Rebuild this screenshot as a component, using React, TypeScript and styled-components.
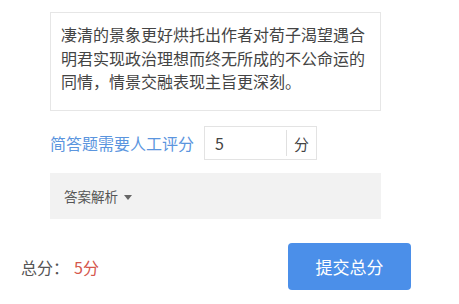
import React from "react";
import styled, { createGlobalStyle } from "styled-components";

const Global = createGlobalStyle`
  html, body { margin: 0; padding: 0; background: #fff; }
  body { font-family: "Noto Sans CJK SC", "Noto Sans", sans-serif; }
`;

const Page = styled.div`
  width: 459px;
  height: 304px;
  overflow: hidden;
  display: flex;
  flex-direction: column;
`;

const Column = styled.div`
  margin-left: 50px;
  width: 331px;
  display: flex;
  flex-direction: column;
`;

const AnswerBox = styled.div`
  margin-top: 12px;
  box-sizing: border-box;
  height: 99px;
  border: 1px solid #e6e6e6;
  padding: 10px 9px 0 10px;
  font-size: 16px;
  line-height: 23.5px;
  color: #444;
`;

const ScoreRow = styled.div`
  margin-top: 15px;
  display: flex;
  align-items: center;
  gap: 10px;
`;

const ScoreLabel = styled.span`
  font-size: 16px;
  color: #5b95de;
  white-space: nowrap;
`;

const ScoreInput = styled.div`
  box-sizing: border-box;
  width: 113px;
  height: 34px;
  border: 1px solid #e3e3e3;
  display: flex;
  align-items: center;
`;

const ScoreValue = styled.span`
  flex: 1;
  padding-left: 10px;
  font-size: 16px;
  color: #444;
`;

const Unit = styled.span`
  width: 29px;
  height: 26px;
  border-left: 1px solid #e0e0e0;
  display: flex;
  align-items: center;
  justify-content: center;
  font-size: 15px;
  color: #444;
`;

const Analysis = styled.div`
  margin-top: 13px;
  height: 46px;
  background: #f2f2f2;
  display: flex;
  align-items: center;
  padding-left: 14px;
  gap: 6px;
  font-size: 13.5px;
  color: #555;
`;

const Caret = styled.span`
  width: 0;
  height: 0;
  border-left: 4px solid transparent;
  border-right: 4px solid transparent;
  border-top: 5px solid #666;
  margin-top: 2px;
`;

const Footer = styled.div`
  margin: 24px 0 0 21px;
  width: 390px;
  display: flex;
  align-items: center;
  justify-content: space-between;
`;

const Total = styled.span`
  font-size: 16px;
  color: #555;
`;

const Red = styled.span`
  color: #d5574c;
  margin-left: 5px;
`;

const SubmitButton = styled.button`
  width: 123px;
  height: 47px;
  border: none;
  border-radius: 4px;
  background: #4b8fe9;
  color: #fff;
  font-family: inherit;
  font-size: 17px;
  cursor: pointer;
`;

export default function App() {
  return (
    <Page>
      <Global />
      <Column>
        <AnswerBox>
          凄清的景象更好烘托出作者对荀子渴望遇合明君实现政治理想而终无所成的不公命运的同情，情景交融表现主旨更深刻。
        </AnswerBox>
        <ScoreRow>
          <ScoreLabel>简答题需要人工评分</ScoreLabel>
          <ScoreInput>
            <ScoreValue>5</ScoreValue>
            <Unit>分</Unit>
          </ScoreInput>
        </ScoreRow>
        <Analysis>
          答案解析
          <Caret />
        </Analysis>
      </Column>
      <Footer>
        <Total>
          总分：<Red>5分</Red>
        </Total>
        <SubmitButton>提交总分</SubmitButton>
      </Footer>
    </Page>
  );
}
